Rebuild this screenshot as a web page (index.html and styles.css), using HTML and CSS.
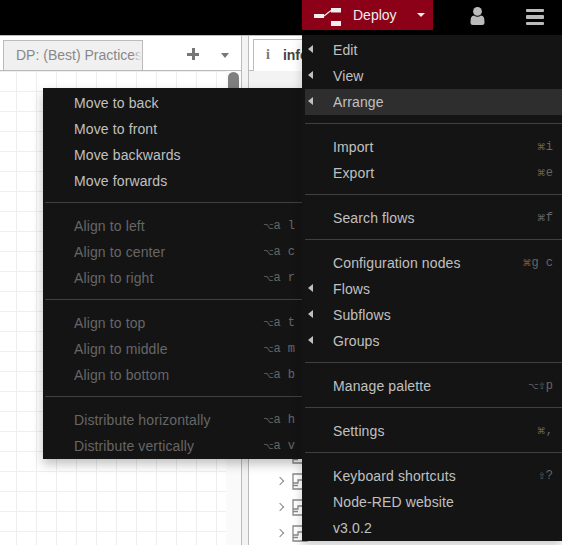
FILE: index.html
```html
<!DOCTYPE html>
<html>
<head>
  <title>Node-RED</title>
  <link rel="stylesheet" href="styles.css">
</head>
<body>
  <header class="header">
    <div class="deploy">
      <svg class="deploy-icon" width="27" height="18" viewBox="0 0 27 18">
        <rect x="0" y="6" width="10" height="4" fill="#eee"/>
        <path d="M10 8 L17 2.5" stroke="#eee" stroke-width="1.2" fill="none"/>
        <rect x="17" y="0" width="10" height="4.5" fill="#eee"/>
        <rect x="17" y="13" width="10" height="5" fill="#eee"/>
      </svg>
      <span class="deploy-label">Deploy</span>
      <span class="deploy-caret"></span>
    </div>
    <div class="user-btn">
      <svg width="15" height="18" viewBox="0 0 15 18">
        <ellipse cx="7.5" cy="4.4" rx="4.4" ry="4.4" fill="#bbb"/>
        <path d="M0.5 15.5 Q0.2 8.5 4 8.5 Q7.5 11 11 8.5 Q14.8 8.5 14.5 15.5 Q14.5 18 12 18 L3 18 Q0.5 18 0.5 15.5 Z" fill="#bbb"/>
      </svg>
    </div>
    <div class="menu-btn">
      <span></span><span></span><span></span>
    </div>
  </header>

  <main class="main">
    <section class="workspace">
      <div class="tabbar">
        <div class="tab">DP: (Best) Practices</div>
        <span class="tab-add"></span>
        <span class="tab-caret"></span>
      </div>
      <div class="canvas">
        <div class="grid"></div>
        <div class="scrollbar"><div class="thumb"></div></div>
      </div>
    </section>
    <div class="splitter"></div>
    <section class="sidebar">
      <div class="side-tabbar">
        <div class="side-tab"><b class="info-i">i</b><span>info</span></div>
      </div>
      <div class="side-head"></div>
      <ul class="tree">
        <li>
          <span class="chev"></span>
          <svg class="node-icon" width="16" height="17" viewBox="0 0 16 17"><path d="M1 1h14v15H1z M1 10h5v-3h4 M10 4.5h5 M1 12.5h5" fill="none" stroke="#888" stroke-width="1.3"/></svg>
        </li>
        <li>
          <span class="chev"></span>
          <svg class="node-icon" width="16" height="17" viewBox="0 0 16 17"><path d="M1 1h14v15H1z M1 10h5v-3h4 M10 4.5h5 M1 12.5h5" fill="none" stroke="#888" stroke-width="1.3"/></svg>
        </li>
        <li>
          <span class="chev"></span>
          <svg class="node-icon" width="16" height="17" viewBox="0 0 16 17"><path d="M1 1h14v15H1z M1 10h5v-3h4 M10 4.5h5 M1 12.5h5" fill="none" stroke="#888" stroke-width="1.3"/></svg>
        </li>
        <li>
          <span class="chev"></span>
          <svg class="node-icon" width="16" height="17" viewBox="0 0 16 17"><path d="M1 1h14v15H1z M1 10h5v-3h4 M10 4.5h5 M1 12.5h5" fill="none" stroke="#888" stroke-width="1.3"/></svg>
          <span class="node-name">Anchors</span>
        </li>
      </ul>
    </section>
  </main>

  <nav class="menu menu-arrange">
    <a class="item">Move to back</a>
    <a class="item">Move to front</a>
    <a class="item">Move backwards</a>
    <a class="item">Move forwards</a>
    <hr>
    <a class="item off">Align to left<kbd><i>⌥</i>a l</kbd></a>
    <a class="item off">Align to center<kbd><i>⌥</i>a c</kbd></a>
    <a class="item off">Align to right<kbd><i>⌥</i>a r</kbd></a>
    <hr>
    <a class="item off">Align to top<kbd><i>⌥</i>a t</kbd></a>
    <a class="item off">Align to middle<kbd><i>⌥</i>a m</kbd></a>
    <a class="item off">Align to bottom<kbd><i>⌥</i>a b</kbd></a>
    <hr>
    <a class="item off">Distribute horizontally<kbd><i>⌥</i>a h</kbd></a>
    <a class="item off">Distribute vertically<kbd><i>⌥</i>a v</kbd></a>
  </nav>

  <nav class="menu menu-main">
    <a class="item sub">Edit</a>
    <a class="item sub">View</a>
    <a class="item sub hover">Arrange</a>
    <hr>
    <a class="item">Import<kbd><i>⌘</i>i</kbd></a>
    <a class="item">Export<kbd><i>⌘</i>e</kbd></a>
    <hr>
    <a class="item">Search flows<kbd><i>⌘</i>f</kbd></a>
    <hr>
    <a class="item">Configuration nodes<kbd><i>⌘</i>g c</kbd></a>
    <a class="item sub">Flows</a>
    <a class="item sub">Subflows</a>
    <a class="item sub">Groups</a>
    <hr>
    <a class="item">Manage palette<kbd><i>⌥⇧</i>p</kbd></a>
    <hr>
    <a class="item">Settings<kbd><i>⌘</i>,</kbd></a>
    <hr>
    <a class="item">Keyboard shortcuts<kbd><i>⇧</i>?</kbd></a>
    <a class="item">Node-RED website</a>
    <a class="item">v3.0.2</a>
  </nav>
</body>
</html>
```
FILE: styles.css
```css
* {
  box-sizing: border-box;
}
html, body {
  height: 100%;
}
body {
  margin: 0;
  overflow: hidden;
  font-family: "Liberation Sans", Arial, sans-serif;
  font-size: 14px;
  background-color: #fff;
}

/* header */
.header {
  display: flex;
  height: 35px;
  background-color: #000;
}
.deploy {
  display: flex;
  align-items: center;
  width: 131px;
  height: 30px;
  margin-left: 302px;
  padding-left: 12px;
  background-color: #8c0018;
  color: #eee;
}
.deploy-icon {
  margin-top: 4px;
}
.deploy-label {
  margin-left: 12px;
}
.deploy-caret {
  margin-left: 20px;
  border-top: 4px solid #eee;
  border-left: 4px solid transparent;
  border-right: 4px solid transparent;
}
.user-btn {
  margin-left: 37px;
  padding-top: 7px;
}
.menu-btn {
  display: flex;
  flex-direction: column;
  gap: 3px;
  width: 18px;
  margin-left: 41px;
  padding-top: 8.5px;
}
.menu-btn span {
  height: 3.5px;
  border-radius: 1px;
  background-color: #bbb;
}

/* workspace */
.main {
  display: flex;
  height: 510px;
  border-top: 1px solid #bbb;
}
.workspace {
  display: flex;
  flex-direction: column;
  width: 241px;
}
.tabbar {
  display: flex;
  align-items: flex-end;
  height: 35px;
  padding-left: 3px;
  border-bottom: 1px solid #bbb;
}
.tab {
  position: relative;
  width: 140px;
  height: 31px;
  margin-bottom: -1px;
  padding: 6px 0 0 12px;
  overflow: hidden;
  white-space: nowrap;
  color: #888;
  background-color: #f0f0f0;
  border: 1px solid #bbb;
}
.tab::after {
  content: "";
  position: absolute;
  top: 0;
  right: 0;
  bottom: 0;
  width: 10px;
  background: linear-gradient(90deg, rgba(240,240,240,0), #f0f0f0);
}
.tab-add {
  width: 12px;
  height: 12px;
  margin: 0 0 10px 44px;
  background:
    linear-gradient(#777, #777) center / 12px 3px no-repeat,
    linear-gradient(#777, #777) center / 3px 12px no-repeat;
}
.tab-caret {
  margin: 0 0 12px 22px;
  border-top: 5px solid #777;
  border-left: 4px solid transparent;
  border-right: 4px solid transparent;
}
.canvas {
  display: flex;
  flex: 1;
}
.grid {
  flex: 1;
  background-color: #fff;
  background-image:
    linear-gradient(#eee 1px, transparent 1px),
    linear-gradient(90deg, #eee 1px, transparent 1px);
  background-size: 20px 20px;
  background-position: 16px 0;
}
.scrollbar {
  width: 15px;
  padding: 1px 2px 0;
  background-color: #fafafa;
}
.thumb {
  width: 11px;
  height: 40px;
  border-radius: 6px;
  background-color: #7f7f7f;
}
.splitter {
  width: 8px;
  background-color: #f3f3f3;
  border-left: 1px solid #bbb;
  border-right: 1px solid #bbb;
}

/* sidebar */
.sidebar {
  flex: 1;
}
.side-tabbar {
  height: 35px;
  padding: 3px 0 0 4px;
  border-bottom: 1px solid #bbb;
}
.side-tab {
  display: flex;
  gap: 13px;
  width: 110px;
  height: 32px;
  padding: 7px 0 0 12px;
  font-weight: bold;
  color: #444;
  background-color: #fff;
  border: 1px solid #bbb;
  border-bottom: none;
}
.info-i {
  font-family: "Liberation Serif", serif;
  color: #777;
}
.side-head {
  height: 17px;
  background-color: #f3f3f3;
}
.tree {
  margin: 354px 0 0;
  padding: 0 0 0 28px;
  list-style: none;
}
.tree li {
  display: flex;
  align-items: center;
  height: 26px;
  color: #444;
}
.chev {
  width: 6px;
  height: 6px;
  margin-right: 9px;
  transform: rotate(45deg);
  border-top: 1px solid #888;
  border-right: 1px solid #888;
}
.node-icon {
  margin-right: 7px;
}

/* menus */
.menu {
  position: absolute;
  background-color: #141414;
  color: #c0c0c0;
  letter-spacing: 0.12px;
}
.menu-main {
  top: 35px;
  left: 302px;
  right: 0;
  height: 506px;
  padding: 2px 0 0 3px;
  box-shadow: 0 5px 10px rgba(0,0,0,0.2);
}
.menu-arrange {
  top: 88px;
  left: 43px;
  width: 262px;
  height: 371px;
  padding-top: 2px;
  box-shadow: 0 5px 10px rgba(0,0,0,0.25);
}
.menu hr {
  height: 1px;
  margin: 8px 2px 10px;
  border: none;
  background-color: #404040;
}
.menu-main hr {
  margin: 8px 0 10px;
}
.item {
  position: relative;
  display: flex;
  justify-content: space-between;
  align-items: center;
  height: 26px;
  padding: 0 10px 0 31px;
}
.menu-main .item {
  padding: 0 9px 0 28px;
}
.item.off {
  color: #666;
}
.item.hover {
  background-color: #2e2e2e;
}
.item.sub::before {
  content: "";
  position: absolute;
  left: 3px;
  top: 8px;
  border-right: 5px solid #c0c0c0;
  border-top: 4.5px solid transparent;
  border-bottom: 4.5px solid transparent;
}
kbd {
  font-family: "Liberation Mono", monospace;
  font-size: 12px;
  letter-spacing: 0;
  color: #666;
}
kbd i {
  font-family: "DejaVu Sans", sans-serif;
  font-size: 9px;
  font-style: normal;
}
```
